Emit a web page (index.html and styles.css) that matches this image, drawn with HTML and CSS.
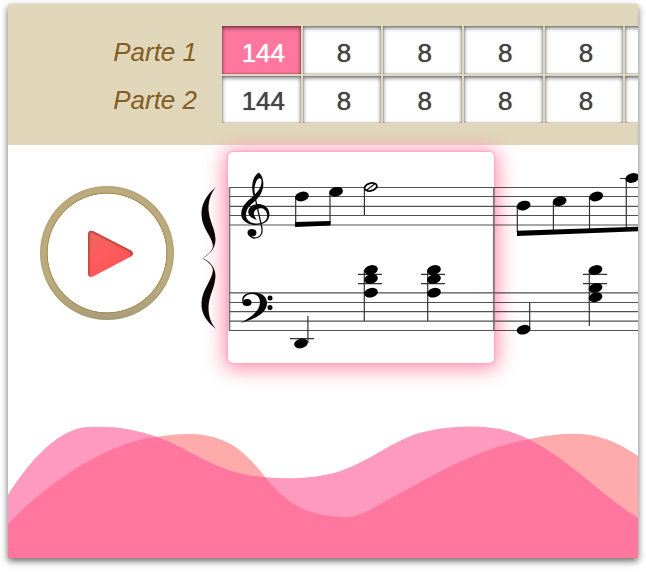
FILE: index.html
```html
<!DOCTYPE html>
<html lang="es">
<head>
<meta charset="utf-8">
<meta name="viewport" content="width=device-width, initial-scale=1">
<title>Partitura</title>
<link rel="stylesheet" href="styles.css">
</head>
<body>
<main class="panel">
  <header class="parts">
    <table class="grid">
      <colgroup><col class="label-col"><col><col><col><col><col><col></colgroup>
      <tbody>
        <tr class="first"><th scope="row">Parte 1</th><td class="active">144</td><td>8</td><td>8</td><td>8</td><td>8</td><td></td></tr>
        <tr class="second"><th scope="row">Parte 2</th><td>144</td><td>8</td><td>8</td><td>8</td><td>8</td><td></td></tr>
      </tbody>
    </table>
  </header>

  <section class="player">
    <button class="play" type="button" aria-label="Play">
      <svg width="50" height="50" viewBox="0 0 50 50" aria-hidden="true">
        <defs>
          <linearGradient id="red" x1="0" y1="0" x2="0.7" y2="1">
            <stop offset="0" stop-color="#e9695c"/><stop offset="0.5" stop-color="#ff5c5c"/><stop offset="1" stop-color="#ff5154"/>
          </linearGradient>
          <clipPath id="tri"><path d="M2 7 Q2 1 8 3.500 L45 22.500 Q49 25.500 45 28.500 L8 48 Q2 51 2 45 Z"/></clipPath>
          <filter id="soft" x="-20%" y="-20%" width="140%" height="140%"><feGaussianBlur stdDeviation="1.200"/></filter>
        </defs>
        <g clip-path="url(#tri)">
          <rect width="50" height="52" fill="url(#red)"/>
          <path d="M1.500 50 L2 7 Q2 1 8 3.500 L45 22.500 Q49 25.500 45 28.500" fill="none" stroke="#7c2c26" stroke-width="2" opacity=".85" filter="url(#soft)"/>
        </g>
      </svg>
    </button>

    <div class="score">
      <div class="measure"></div>
      <svg class="notation" role="img" aria-label="Score">
        <defs>
          <ellipse id="head" rx="7" ry="4.700" transform="rotate(-15)"/>
        </defs>
        <g transform="translate(-194 -145)">
          <!-- brace -->
          <g fill="#0b0608">
            <path d="M216 187 C207 194 201 204 201.500 215 C202 229 212 236 213 246 C212 252 207 255 202 258.300 C209 255 215.500 249 215.500 239 C215 228 209 221 208.500 209 C208.500 200 211 193 216 187Z"/>
            <path d="M216 329 C207 322 201 314 201.500 303 C202 289 212 281 213 270 C212 264 207 261 202 257.900 C209 260 215.500 267 215.500 276 C215 288 209 295 208.500 307 C208.500 317 211 323 216 329Z"/>
          </g>
          <!-- staves and bar lines -->
          <g stroke="#333" stroke-width="1.200" opacity=".85">
            <path d="M229 187.500H2000M229 196.500H2000M229 206.300H2000M229 215.500H2000M229 225H2000"/>
            <path d="M229 292.900H2000M229 302.500H2000M229 311.700H2000M229 321.200H2000M229 330.500H2000"/>
          </g>
          <path d="M229.500 187V331M493.800 187V331" stroke="#666" stroke-width="1.800" opacity=".85"/>
          <!-- treble clef -->
          <path d="M254 197 C251 190 251 177 259 172.500 C265 178 265 190 258 198 C252 204 246 207 246 215 C246 221 252 224 257.500 223.500 C264 223 268 220 267 214 C266 209 262 207.500 259 208.500 C252 210 253 216 257 219.500 C250 219 246 213 249.500 208 C252 204 259 203 263 205 C271 208 271 218 266 222 C259 227 246 226 242 218 C239 210 245 203 250 199 C257 193 262 188 261.500 180 C260 177 258 178 256.500 181 C254 186 254 192 255.500 196Z" fill="#080808"/>
          <path d="M254.500 195 L261.500 226 C263.500 234 260 238 254 238 C250 237 248.500 235 248.500 232" fill="none" stroke="#111" stroke-width="1.300"/>
          <ellipse cx="252" cy="232.700" rx="4.500" ry="3.700" fill="#080808"/>
          <!-- bass clef -->
          <path d="M243 303 C240 296 246 292.500 253 292.500 C262 292.500 267.500 297 267 304 C266 314 253 320 240.500 323 C250 318 259 312 260 303 C260 297 257 294.500 252 294 C247 294 243 297 243 303Z" fill="#080808"/>
          <ellipse cx="247" cy="302.500" rx="4.500" ry="3.500"/>
          <circle cx="270" cy="298" r="2.500"/><circle cx="270" cy="307.500" r="2.500"/>
          <!-- stems and ledger lines -->
          <g stroke="#333" stroke-width="1.200" fill="none">
            <path d="M295.700 197V225M330 193V224M364.400 187V215M307.900 316V343M364.300 270V321M427.700 270V321"/>
            <path d="M290 338.600H314M358 274.300H382M358 283.600H382M421 274.300H445M421 283.600H445"/>
            <path d="M517.300 207V232M553.400 202V231M589.500 197V230M626.300 179V228M529.700 302V329M589.300 270V326"/>
            <path d="M620 178.500H650M583 274.300H607M583 283.600H607"/>
          </g>
          <path d="M295 222L330.500 221V225.500L295 227ZM517 230.800L660 226V230.500L517 236Z"/>
          <!-- note heads -->
          <use href="#head" x="302" y="196.500"/><use href="#head" x="336" y="191.800"/>
          <use href="#head" x="301" y="343.500"/>
          <use href="#head" x="371" y="270"/><use href="#head" x="371" y="279"/><use href="#head" x="371" y="292.700"/>
          <use href="#head" x="434" y="270"/><use href="#head" x="434" y="279"/><use href="#head" x="434" y="292.700"/>
          <use href="#head" x="523.600" y="205.600"/><use href="#head" x="559.600" y="201.200"/><use href="#head" x="596.200" y="196.500"/><use href="#head" x="632.300" y="178"/>
          <use href="#head" x="523.600" y="329.700"/>
          <use href="#head" x="595.500" y="270"/><use href="#head" x="595.500" y="288"/><use href="#head" x="595.500" y="297.300"/>
          <g transform="translate(370.700 187) rotate(-15)">
            <ellipse rx="6.300" ry="3.800" fill="#fff" stroke="#000" stroke-width="1.800"/>
            <path d="M-5 2L5 -2" stroke="#000" stroke-width="1"/>
          </g>
        </g>
      </svg>
    </div>
  </section>

  <svg class="waves" viewBox="8 418 630 140" preserveAspectRatio="none" aria-hidden="true">
    <defs>
      <path id="wave-a" d="M8 495 C30 460 59 428 88 427 C114 426 135 429 157 437 C192 450 212 469 250 475.500 C280 480 310 479 334 473 C370 463 395 437 428 431 C450 426 478 425 500 429 C550 439 596 492 638 518 V558 H8Z"/>
      <clipPath id="wave-clip"><use href="#wave-a"/></clipPath>
      <path id="wave-b" d="M8 524 C45 485 104 443 157 436.700 C180 433 203 432 222 440 C238 446 251 459 265 477 C279 495 296 510 323 515 C333 516.500 340 517.500 351 517 C365 515 384 501 406 490 C443 470 483 447 530 439 C553 434 577 432 595 436 C612 440 625 447 638 456 V558 H8Z"/>
    </defs>
    <use href="#wave-b" class="wave-peach"/>
    <use href="#wave-a" class="wave-light"/>
    <g clip-path="url(#wave-clip)"><use href="#wave-b" class="wave-deep"/></g>
  </svg>
</main>
</body>
</html>
```
FILE: styles.css
```css
* {
  box-sizing: border-box;
}

body {
  margin: 0;
  padding: 4px 8px 14px;
  background: #fff;
  font-family: "Liberation Sans", Arial, sans-serif;
}

.panel {
  overflow: hidden;
  background: #fff;
  box-shadow: 0 3px 7px rgba(0, 0, 0, 0.6);
}

.parts {
  height: 141px;
  padding-top: 20px;
  overflow: hidden;
  background: #e0d7ba;
}

.grid {
  width: 698px;
  table-layout: fixed;
  border-collapse: separate;
  border-spacing: 2px;
  font-size: 26px;
  line-height: 30px;
}

.label-col {
  width: 210px;
}

.grid th,
.grid td {
  vertical-align: top;
}

.first {
  height: 48px;
}

.second {
  height: 47px;
}

.grid th {
  padding: 11px 23px 0 0;
  color: #835b1f;
  font-style: italic;
  font-weight: 400;
  text-align: right;
}

.grid td {
  padding: 12px 0 0 4px;
  background: #fff;
  box-shadow: inset 0 2px 4px rgba(0, 0, 0, 0.55), inset 0 0 2px rgba(0, 0, 0, 0.4);
  color: #444;
  text-align: center;
  text-shadow: 0 0 1px currentColor;
}

.grid .second th {
  padding-top: 9px;
}

.grid .second td {
  padding-top: 10px;
}

.grid .active {
  background: #ff779f;
  color: #fff;
}

.player {
  display: flex;
  align-items: flex-start;
  height: 273px;
}

.play {
  display: grid;
  flex: none;
  place-items: center;
  width: 134px;
  height: 134px;
  margin: 41px 20px 0 32px;
  padding: 0 0 0 8px;
  border: 0;
  border-radius: 50%;
  background:
    radial-gradient(circle closest-side, #fff 88%, #a58d52 89%, transparent 91%),
    linear-gradient(#bbac80 70%, #a99e7c);
  box-shadow: inset 0 0 2px #9c8445;
  cursor: pointer;
}

.score {
  position: relative;
  flex: 1;
  min-width: 0;
}

.measure {
  position: absolute;
  top: 7px;
  left: 34px;
  width: 266px;
  height: 211px;
  border-radius: 5px;
  background: #fff;
  box-shadow: 0 0 2px 1px #ffa6c0, 0 2px 20px 4px #ff8fb0;
}

.notation {
  position: relative;
  display: block;
  width: 100%;
  height: 250px;
}

.waves {
  display: block;
  width: 100%;
  height: 140px;
}

.wave-peach {
  fill: #ffabab;
}

.wave-light {
  fill: #ff9abf;
}

.wave-deep {
  fill: #ff779f;
}
```
